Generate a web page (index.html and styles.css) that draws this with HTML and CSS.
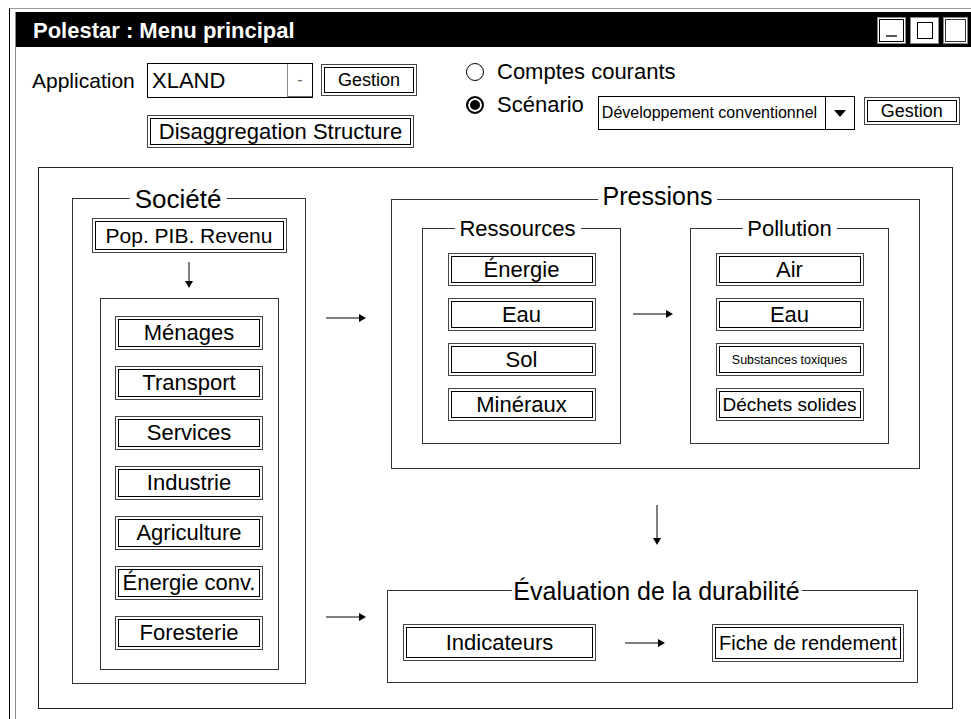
FILE: index.html
```html
<!DOCTYPE html>
<html lang="fr">
<head>
    <meta charset="UTF-8">
    <meta name="viewport" content="width=device-width, initial-scale=1.0">
    <title>Polestar : Menu principal</title>
    <link rel="stylesheet" href="styles.css">
</head>
<body>

    <div class="window">
        <div class="panel">
            <div class="titlebar">
                <span class="title">Polestar : Menu principal</span>
                <div class="title-buttons">
                    <span class="tb tb-min"><i></i></span>
                    <span class="tb tb-max"><i></i></span>
                    <span class="tb tb-close"><i></i></span>
                </div>
            </div>

            <div class="controls">
                <div class="app-block">
                    <div class="app-row">
                        <label class="app-label" for="app">Application</label>
                        <div class="combo" id="app">
                            <span class="combo-value">XLAND</span>
                            <span class="combo-btn">-</span>
                        </div>
                        <button class="btn btn-gestion">Gestion</button>
                    </div>
                    <button class="btn btn-disagg">Disaggregation Structure</button>
                </div>

                <div class="mode-block">
                    <div class="radio-row"><span class="radio"></span>Comptes courants</div>
                    <div class="scenario-row">
                        <div class="radio-row"><span class="radio checked"></span>Scénario</div>
                        <div class="select">
                            <span class="select-value">Développement conventionnel</span>
                            <span class="select-btn"><i></i></span>
                        </div>
                        <button class="btn btn-gestion btn-gestion2">Gestion</button>
                    </div>
                </div>
            </div>

            <div class="diagram">
                <!-- Société -->
                <div class="group societe">
                    <span class="group-title">Société</span>
                    <button class="btn btn-pop">Pop. PIB. Revenu</button>
                    <svg class="arrow-down short" width="10" height="26" viewBox="0 0 10 26">
                        <path d="M5 0V20" stroke="#000" stroke-width="1"/>
                        <path d="M1 19L5 26L9 19Z"/>
                    </svg>
                    <div class="sectors">
                        <button class="btn node">Ménages</button>
                        <button class="btn node">Transport</button>
                        <button class="btn node">Services</button>
                        <button class="btn node">Industrie</button>
                        <button class="btn node">Agriculture</button>
                        <button class="btn node">Énergie conv.</button>
                        <button class="btn node">Foresterie</button>
                    </div>
                </div>

                <div class="links">
                    <svg class="arrow-right link-top" width="40" height="10" viewBox="0 0 40 10">
                        <path d="M0 5H35" stroke="#000" stroke-width="1"/>
                        <path d="M33 1L40 5L33 9Z"/>
                    </svg>
                    <svg class="arrow-right link-bottom" width="40" height="10" viewBox="0 0 40 10">
                        <path d="M0 5H35" stroke="#000" stroke-width="1"/>
                        <path d="M33 1L40 5L33 9Z"/>
                    </svg>
                </div>

                <div class="flow-right">
                    <!-- Pressions -->
                    <div class="group pressions">
                        <span class="group-title">Pressions</span>
                        <div class="group sub ressources">
                            <span class="group-title">Ressources</span>
                            <button class="btn node">Énergie</button>
                            <button class="btn node">Eau</button>
                            <button class="btn node">Sol</button>
                            <button class="btn node">Minéraux</button>
                        </div>
                        <svg class="arrow-right link-mid" width="40" height="10" viewBox="0 0 40 10">
                            <path d="M0 5H35" stroke="#000" stroke-width="1"/>
                            <path d="M33 1L40 5L33 9Z"/>
                        </svg>
                        <div class="group sub pollution">
                            <span class="group-title">Pollution</span>
                            <button class="btn node">Air</button>
                            <button class="btn node">Eau</button>
                            <button class="btn node node-tiny">Substances toxiques</button>
                            <button class="btn node node-narrow">Déchets solides</button>
                        </div>
                    </div>

                    <svg class="arrow-down long" width="10" height="40" viewBox="0 0 10 40">
                        <path d="M5 0V34" stroke="#000" stroke-width="1"/>
                        <path d="M1 33L5 40L9 33Z"/>
                    </svg>

                    <!-- Évaluation -->
                    <div class="group evaluation">
                        <span class="group-title">Évaluation de la durabilité</span>
                        <button class="btn btn-indic">Indicateurs</button>
                        <svg class="arrow-right link-eval" width="40" height="10" viewBox="0 0 40 10">
                            <path d="M0 5H35" stroke="#000" stroke-width="1"/>
                            <path d="M33 1L40 5L33 9Z"/>
                        </svg>
                        <button class="btn btn-fiche">Fiche de rendement</button>
                    </div>
                </div>
            </div>
        </div>
    </div>

</body>
</html>
```

FILE: styles.css
```css
html, body {
    margin: 0;
    height: 100%;
    overflow: hidden;
    background: #fff;
}
body {
    font-family: "Liberation Sans", Arial, sans-serif;
    color: #000;
}

/* window frame */
.window {
    margin: 8px 0 0 9px;
    height: 711px;
    box-sizing: border-box;
    border-left: 1px solid #000;
    border-top: 1px solid #9a9a9a;
    padding: 3px 0 0 5px;
}
.panel {
    height: 100%;
    border-left: 1px solid #8a8a8a;
}
.titlebar {
    background: #000;
    height: 35px;
    display: flex;
    justify-content: space-between;
    padding: 0 3px 0 17px;
}
.title {
    color: #fff;
    font-weight: bold;
    font-size: 22px;
    line-height: 37px;
}
.title-buttons {
    display: flex;
    gap: 4px;
    margin-top: 5px;
}
.tb {
    width: 29px;
    height: 27px;
    box-sizing: border-box;
    background: #fff;
    border: 1px solid #888;
    display: flex;
    align-items: center;
    justify-content: center;
}
.tb i {
    display: block;
    box-sizing: border-box;
}
.tb-min i {
    width: 25px;
    height: 23px;
    border: 1px solid #000;
    position: relative;
}
.tb-min i::after {
    content: "";
    position: absolute;
    left: 6px;
    right: 6px;
    bottom: 4px;
    border-top: 2px solid #555;
}
.tb-max i {
    width: 16px;
    height: 17px;
    border: 1px solid #000;
}
.tb-close {
    width: 25px;
}
.tb-close i {
    width: 21px;
    height: 23px;
    border: 1px solid #333;
}

/* buttons with double frame */
.btn {
    font: inherit;
    color: #000;
    background: #fff;
    border: 1px solid #444;
    padding: 0;
    box-sizing: border-box;
    box-shadow: inset 0 0 0 2px #fff, inset 0 0 0 3px #000;
    display: flex;
    align-items: center;
    justify-content: center;
    white-space: nowrap;
    cursor: pointer;
}

/* top controls */
.controls {
    display: flex;
    padding: 16px 0 0 16px;
}
.app-row {
    display: flex;
    align-items: flex-start;
}
.app-label {
    width: 115px;
    font-size: 21px;
    line-height: 35px;
}
.combo {
    display: flex;
    width: 166px;
    height: 35px;
    box-sizing: border-box;
    border: 1px solid #000;
}
.combo-value {
    width: 139px;
    padding-left: 4px;
    box-sizing: border-box;
    font-size: 22px;
    line-height: 33px;
}
.combo-btn {
    flex: 1;
    border-left: 1px solid #888;
    border-bottom: 1px solid #666;
    text-align: center;
    color: #666;
    font-size: 16px;
    line-height: 32px;
}
.btn-gestion {
    width: 96px;
    height: 32px;
    margin: 1px 0 0 8px;
    font-size: 18px;
}
.btn-disagg {
    width: 267px;
    height: 33px;
    margin: 17px 0 0 115px;
    font-size: 22px;
}
.mode-block {
    margin: -3px 0 0 49px;
    font-size: 22px;
}
.radio-row {
    display: flex;
    align-items: center;
    gap: 13px;
    height: 24px;
}
.radio {
    width: 18px;
    height: 18px;
    box-sizing: border-box;
    border: 1px solid #000;
    border-radius: 50%;
}
.radio.checked {
    border-width: 2px;
    background: #000;
    box-shadow: inset 0 0 0 2px #fff;
}
.scenario-row {
    display: flex;
    align-items: flex-start;
    margin-top: 9px;
}
.select {
    display: flex;
    width: 257px;
    height: 34px;
    box-sizing: border-box;
    border: 1px solid #000;
    margin: 3px 0 0 14px;
}
.select-value {
    width: 226px;
    padding-left: 3px;
    box-sizing: border-box;
    font-size: 16px;
    line-height: 32px;
    white-space: nowrap;
    overflow: hidden;
}
.select-btn {
    flex: 1;
    border-left: 1px solid #000;
    display: flex;
    align-items: center;
    justify-content: center;
}
.select-btn i {
    border-left: 6px solid transparent;
    border-right: 6px solid transparent;
    border-top: 7px solid #000;
}
.btn-gestion2 {
    height: 28px;
    margin: 4px 0 0 9px;
}

/* diagram */
.diagram {
    display: flex;
    width: 915px;
    height: 542px;
    box-sizing: border-box;
    margin: 19px 0 0 22px;
    padding: 30px 0 0 33px;
    border: 1px solid #222;
}
.group {
    position: relative;
    box-sizing: border-box;
    border: 1px solid #333;
}
.group-title {
    position: absolute;
    top: 0;
    left: 50%;
    transform: translate(-50%, -50%);
    background: #fff;
    padding: 0 5px;
    line-height: 1;
    font-size: 22px;
    white-space: nowrap;
}
.node {
    width: 148px;
    height: 34px;
    font-size: 22px;
}

.societe {
    width: 234px;
    height: 486px;
    padding-top: 19px;
    display: flex;
    flex-direction: column;
    align-items: center;
}
.societe > .group-title {
    left: calc(50% - 11px);
    font-size: 26px;
}
.btn-pop {
    width: 195px;
    height: 35px;
    font-size: 21px;
}
.arrow-down {
    display: block;
    flex-shrink: 0;
}
.arrow-down.short {
    margin-top: 9px;
}
.sectors {
    width: 179px;
    height: 372px;
    margin-top: 10px;
    box-sizing: border-box;
    border: 1px solid #333;
    padding-top: 17px;
    display: flex;
    flex-direction: column;
    align-items: center;
    gap: 16px;
}

.links {
    width: 81px;
    padding-left: 20px;
    box-sizing: border-box;
    display: flex;
    flex-direction: column;
}
.arrow-right {
    display: block;
    flex-shrink: 0;
}
.link-top {
    margin-top: 115px;
}
.link-bottom {
    margin-top: 289px;
}

.flow-right {
    display: flex;
    flex-direction: column;
}
.pressions {
    width: 529px;
    height: 270px;
    margin: 1px 0 0 4px;
    padding: 28px 0 0 30px;
    display: flex;
    align-items: flex-start;
}
.pressions > .group-title {
    font-size: 25px;
    left: calc(50% + 2px);
    transform: translate(-50%, -65%);
}
.sub {
    width: 199px;
    height: 216px;
    padding-top: 24px;
    display: flex;
    flex-direction: column;
    align-items: center;
    gap: 12px;
}
.sub .node {
    height: 33px;
}
.ressources > .group-title {
    left: calc(50% - 4px);
}
.link-mid {
    margin: 81px 0 0 12px;
}
.pollution {
    margin-left: 17px;
}
.node-tiny {
    font-size: 12.5px;
}
.node-narrow {
    font-size: 19px;
}

.arrow-down.long {
    margin: 36px 0 0 265px;
}
.evaluation {
    width: 531px;
    height: 93px;
    margin-top: 45px;
    padding: 33px 0 0 15px;
    display: flex;
    align-items: flex-start;
}
.evaluation > .group-title {
    font-size: 25px;
    padding: 0 2px;
    left: calc(50% + 4px);
}
.btn-indic {
    width: 193px;
    height: 37px;
    font-size: 22px;
}
.link-eval {
    margin: 14px 0 0 29px;
}
.btn-fiche {
    width: 192px;
    height: 38px;
    margin-left: 47px;
    font-size: 20px;
}
```
